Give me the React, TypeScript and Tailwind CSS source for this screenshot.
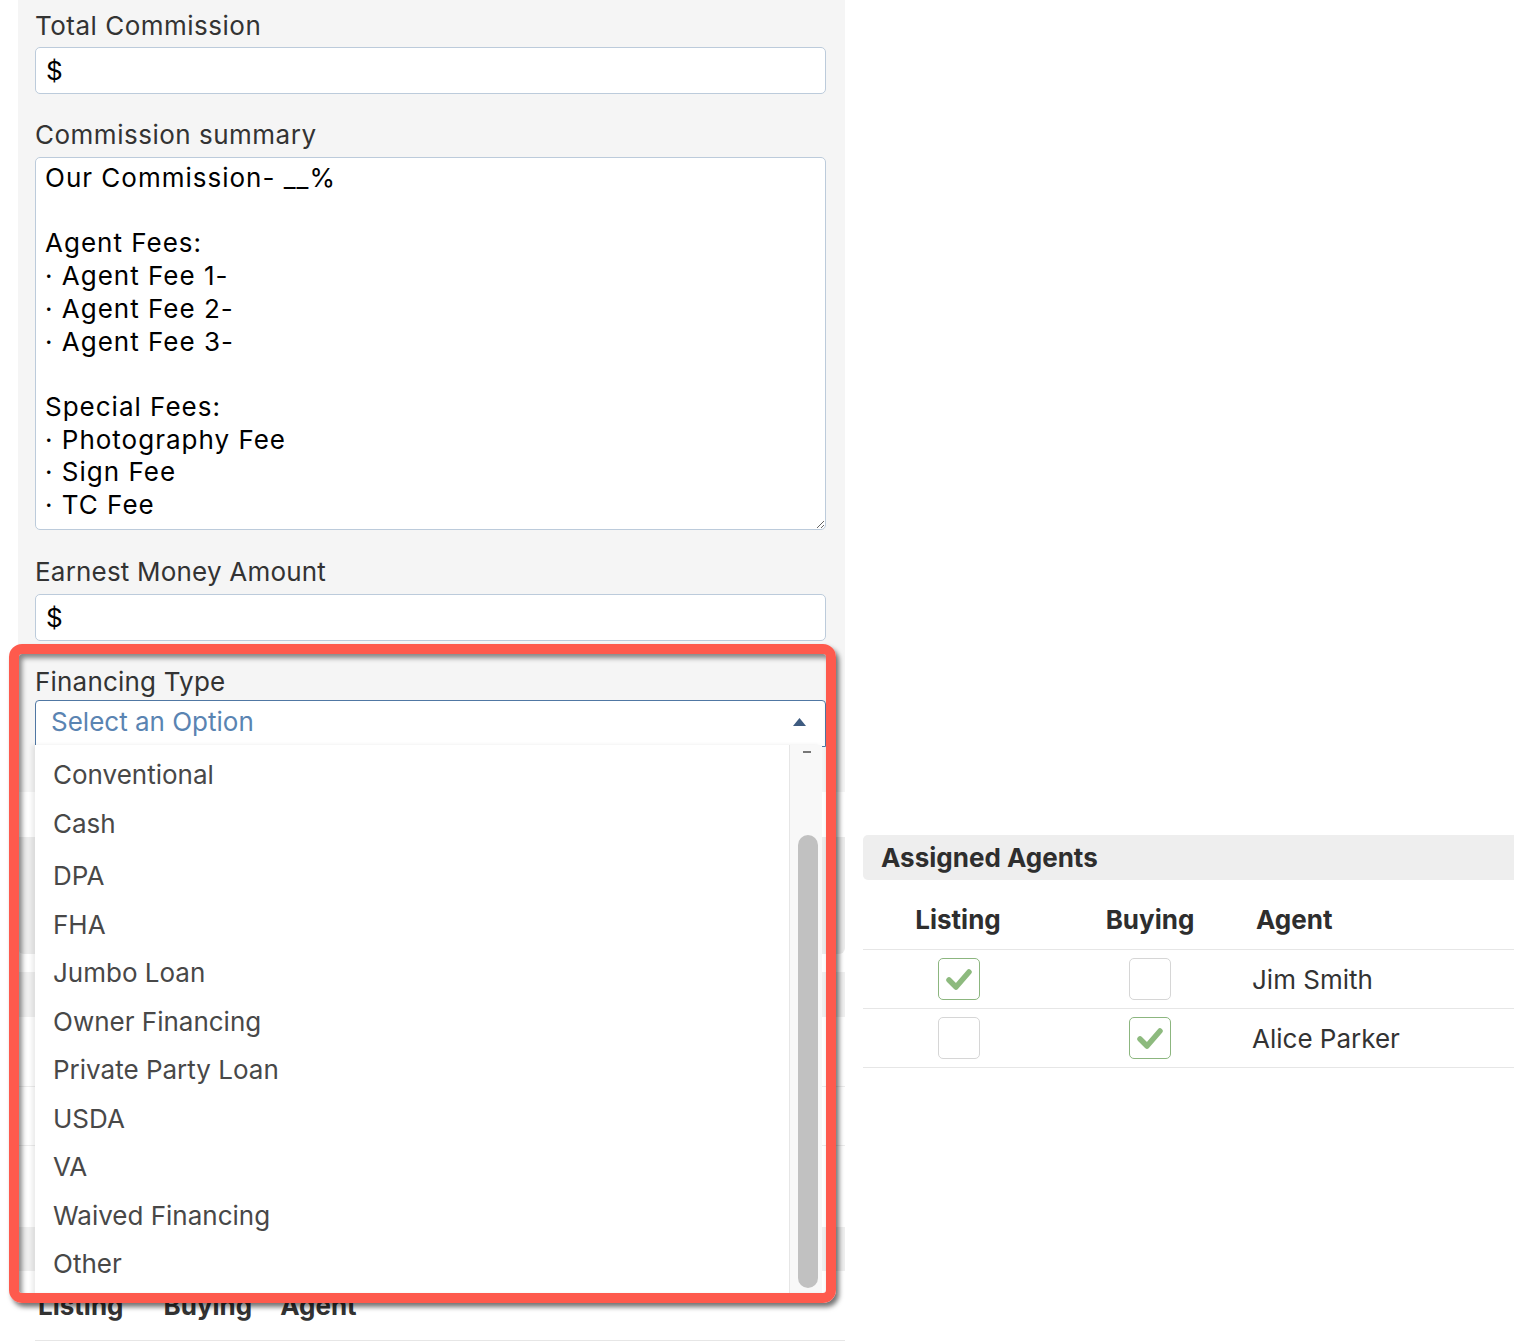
import React from 'react';

const font = { fontFamily: 'Inter, "Noto Sans", sans-serif' };

const options = [
  'Conventional',
  'Cash',
  'DPA',
  'FHA',
  'Jumbo Loan',
  'Owner Financing',
  'Private Party Loan',
  'USDA',
  'VA',
  'Waived Financing',
  'Other',
];

const summary = `Our Commission- __%

Agent Fees:
· Agent Fee 1-
· Agent Fee 2-
· Agent Fee 3-

Special Fees:
· Photography Fee
· Sign Fee
· TC Fee`;

function Check({ on }: { on: boolean }) {
  return (
    <div
      className={`w-[42px] h-[42px] rounded-[5px] bg-white border flex items-center justify-center ${
        on ? 'border-[#8cb67f]' : 'border-[#d6d6d6]'
      }`}
    >
      {on && (
        <svg width="30" height="30" viewBox="0 0 30 30">
          <path d="M5 16 L12 23 L25 8" fill="none" stroke="#8dba7e" strokeWidth="5.5" strokeLinecap="round" strokeLinejoin="round" />
        </svg>
      )}
    </div>
  );
}

export default function App() {
  const agents = [
    { name: 'Jim Smith', listing: true, buying: false },
    { name: 'Alice Parker', listing: false, buying: true },
  ];

  return (
    <div className="w-[1514px] min-h-[1342px] bg-white flex text-[#333]" style={font}>
      {/* left column */}
      <div className="ml-[18px] w-[827px] relative shrink-0">
        <div className="bg-[#f5f5f5] pl-[17px] pr-[19px] pt-[8px] pb-[45px]">
          <div className="text-[26px] leading-[36px] tracking-[0.5px] mb-[3px]">Total Commission</div>
          <div className="h-[47px] bg-white border border-[#bccbdb] rounded-[5px] pl-[10px] flex items-center text-[26px] text-black">$</div>

          <div className="text-[26px] leading-[36px] tracking-[0.5px] mt-[23px] mb-[4px]">Commission summary</div>
          <textarea
            readOnly
            defaultValue={summary}
            className="block w-full h-[373px] bg-white border border-[#bccbdb] rounded-[5px] pl-[9px] pt-[4px] text-[26px] leading-[32.7px] tracking-[1px] text-black outline-none overflow-hidden"
            style={font}
          />

          <div className="text-[26px] leading-[36px] tracking-[0.2px] mt-[24px] mb-[4px]">Earnest Money Amount</div>
          <div className="h-[47px] bg-white border border-[#bccbdb] rounded-[5px] pl-[10px] flex items-center text-[26px] text-black">$</div>

          <div className="text-[26px] leading-[36px] tracking-[0.2px] mt-[23px]">Financing Type</div>
          <div className="h-[47px] bg-white border border-[#5077a3] rounded-t-[4px] pl-[15px] pr-[19px] flex items-center justify-between">
            <span className="text-[26px] leading-[30px] -mt-[4px] text-[#5a84b2]">Select an Option</span>
            <svg width="13" height="8" viewBox="0 0 13 8" className="-mt-[3px]">
              <path d="M0 8 L6.5 0 L13 8 Z" fill="#3e5b80" />
            </svg>
          </div>
        </div>

        {/* content hidden behind the open list */}
        <div className="pt-[45px]">
          <div className="h-[117px] bg-[#ececec] rounded-b-[6px]" />
          <div className="h-[18px]" />
          <div className="h-[45px] bg-[#f0f0f0]" />
          <div className="h-[70px] border-b border-[#ececec]" />
          <div className="h-[59px] border-b border-[#ececec]" />
          <div className="h-[81px]" />
          <div className="h-[44px] bg-[#efefef]" />
          <div className="flex items-center h-[70px] pl-[3px] gap-[40px] text-[26px] font-bold text-[#333] border-b border-[#e6e6e6] ml-[17px]">
            <span>Listing</span>
            <span>Buying</span>
            <span className="-ml-[12px]">Agent</span>
          </div>
        </div>

        {/* open dropdown list */}
        <div className="absolute left-[17px] top-[745px] w-[787px] h-[550px] bg-white shadow-[-3px_0_4px_rgba(0,0,0,0.08)] flex">
          <div className="flex-1 pt-[6px] pl-[18px] text-[26px] text-[#484848]">
            {options.map((o, i) => (
              <div key={o} className={`h-[48.5px] leading-[48.5px] ${i === 2 ? 'mt-[4px]' : ''}`}>
                {o}
              </div>
            ))}
          </div>
          <div className="w-[33px] relative bg-[#f8f8f8] border-l border-[#e6e6e6]">
            <div className="absolute left-[13px] top-[6px] w-[8px] h-[2px] bg-[#777]" />
            <div className="absolute left-[8px] top-[90px] w-[20px] bottom-[7px] rounded-full bg-[#c1c1c1]" />
          </div>
        </div>

        {/* annotation frame */}
        <div className="absolute left-[-9px] top-[644px] w-[827px] h-[659px] border-[10px] border-[#fe5a4d] rounded-[13px] shadow-[3px_4px_5px_rgba(0,0,0,0.55),inset_3px_4px_5px_rgba(0,0,0,0.45)] pointer-events-none" />
      </div>

      {/* right column */}
      <div className="ml-[18px] flex-1 pt-[835px]">
        <div className="h-[45px] bg-[#eeeeee] rounded-l-[5px] pl-[18px] flex items-center text-[26px] font-bold text-[#2e2e2e]">
          Assigned Agents
        </div>
        <div className="grid grid-cols-[190px_194px_1fr] h-[70px] items-center pt-[10px] border-b border-[#e6e6e6] text-[26px] font-bold text-[#2e2e2e]">
          <div className="text-center">Listing</div>
          <div className="text-center">Buying</div>
          <div className="pl-[9px]">Agent</div>
        </div>
        {agents.map((a) => (
          <div key={a.name} className="grid grid-cols-[190px_194px_1fr] h-[59px] items-center border-b border-[#e6e6e6]">
            <div className="flex justify-center pl-[1px]"><Check on={a.listing} /></div>
            <div className="flex justify-center"><Check on={a.buying} /></div>
            <div className="pl-[5px] text-[26px] text-[#333]">{a.name}</div>
          </div>
        ))}
      </div>
    </div>
  );
}
